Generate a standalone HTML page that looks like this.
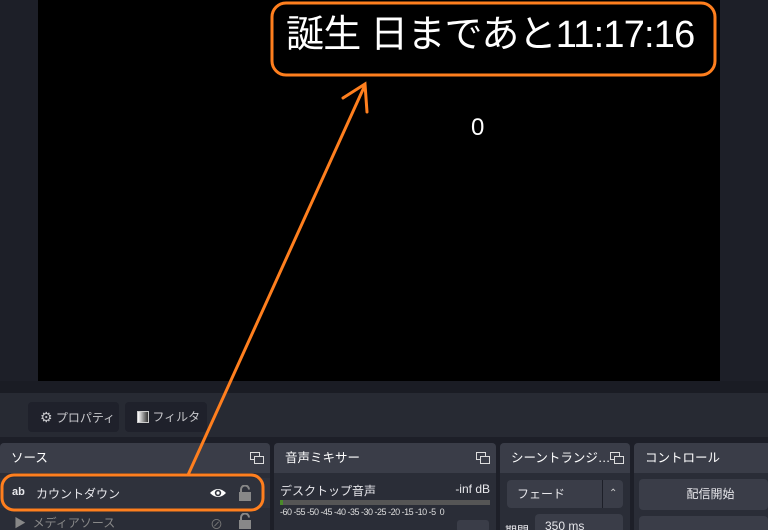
<!DOCTYPE html>
<html><head><meta charset="utf-8"><style>
*{margin:0;padding:0;box-sizing:border-box}
html,body{width:768px;height:530px;overflow:hidden}
body{background:#1d1f28;font-family:"Liberation Sans","Noto Sans CJK JP",sans-serif;color:#e8e8ec;position:relative;font-size:12px}
.abs{position:absolute}
.prev{left:38px;top:0;width:682px;height:381px;background:#000}
.band{left:0;top:381px;width:768px;height:12px;background:#1a1c24}
.tool{left:0;top:393px;width:768px;height:44px;background:#272a33}
.btn{top:402px;height:30px;background:#1f212b;border-radius:4px;color:#c8c8cc;font-size:12px;line-height:30px;padding-left:12px}
.panel{top:443px;height:87px;background:#2a2d37;border-radius:4px 4px 0 0;overflow:hidden}
.hdr{height:30px;background:#3a3d48;line-height:30px;padding-left:11px;font-size:12.5px;color:#fff;position:relative}
.dock{position:absolute;top:9px;right:6px;width:14px;height:12px}
</style></head><body>
<div class="abs prev"></div>
<div class="abs" style="left:286px;top:12px;font-size:38px;line-height:46px;color:#fff;letter-spacing:-0.8px;white-space:nowrap">誕生 日まであと11:17:16</div>
<div class="abs" style="left:471px;top:114px;font-size:24px;color:#fff">0</div>
<div class="abs band"></div>
<div class="abs tool"></div>
<div class="abs btn" style="left:28px;width:91px"><span style="font-size:14px">⚙</span> プロパティ</div>
<div class="abs btn" style="left:125px;width:82px"><span style="display:inline-block;width:12px;height:12px;border:1px solid #ccc;background:linear-gradient(90deg,#fff,#333);vertical-align:-2px"></span> フィルタ</div>

<div class="abs panel" style="left:0;width:270px">
 <div class="hdr">ソース<svg class="dock" viewBox="0 0 14 12"><rect x="0.5" y="0.5" width="9" height="7" fill="none" stroke="#ddd"/><rect x="4.5" y="4.5" width="9" height="7" fill="#3a3d48" stroke="#ddd"/></svg></div>
 <div class="abs" style="left:0;top:35px;width:270px;height:30px;background:#2f323c"></div>
 <div class="abs" style="left:12px;top:43px;font-size:11px;font-weight:bold">ab</div>
 <div class="abs" style="left:36px;top:42px;font-size:12px">カウントダウン</div>
 <svg class="abs" style="left:209px;top:44px" width="18" height="12" viewBox="0 0 18 12"><path d="M1 6 Q9 -2 17 6 Q9 14 1 6Z" fill="#fff"/><circle cx="9" cy="6" r="3.2" fill="#2f323c"/><circle cx="9" cy="6" r="1.6" fill="#fff"/></svg>
 <svg class="abs" style="left:238px;top:42px" width="14" height="16" viewBox="0 0 14 16"><path d="M3 7V4.5a4 4 0 0 1 8 0" fill="none" stroke="#888" stroke-width="2"/><rect x="1" y="7" width="12" height="9" fill="#888"/></svg>
 <div class="abs" style="left:14px;top:71px;color:#888;font-size:12px">▶&nbsp;&nbsp;メディアソース</div>
 <div class="abs" style="left:210px;top:71px;color:#777;font-size:13px">⊘</div>
 <svg class="abs" style="left:238px;top:70px" width="14" height="16" viewBox="0 0 14 16"><path d="M3 7V4.5a4 4 0 0 1 8 0" fill="none" stroke="#888" stroke-width="2"/><rect x="1" y="7" width="12" height="9" fill="#888"/></svg>
</div>
<div class="abs panel" style="left:274px;width:222px">
 <div class="hdr">音声ミキサー<svg class="dock" viewBox="0 0 14 12"><rect x="0.5" y="0.5" width="9" height="7" fill="none" stroke="#ddd"/><rect x="4.5" y="4.5" width="9" height="7" fill="#3a3d48" stroke="#ddd"/></svg></div>
 <div class="abs" style="left:6px;top:39px">デスクトップ音声</div>
 <div class="abs" style="right:6px;top:39px">-inf dB</div>
 <div class="abs" style="left:6px;top:57px;width:210px;height:5px;background:#555"></div>
 <div class="abs" style="left:6px;top:57px;width:3px;height:5px;background:#4a8a2a"></div>
 <div class="abs" style="left:6px;top:64px;font-size:9px;color:#ddd;white-space:nowrap;letter-spacing:-0.5px">-60 -55 -50 -45 -40 -35 -30 -25 -20 -15 -10 -5 &nbsp;0</div>
 <div class="abs" style="left:183px;top:77px;width:32px;height:12px;background:#3a3d48;border-radius:3px"></div>
</div>
<div class="abs panel" style="left:500px;width:130px">
 <div class="hdr">シーントランジ…<svg class="dock" viewBox="0 0 14 12"><rect x="0.5" y="0.5" width="9" height="7" fill="none" stroke="#ddd"/><rect x="4.5" y="4.5" width="9" height="7" fill="#3a3d48" stroke="#ddd"/></svg></div>
 <div class="abs" style="left:7px;top:37px;width:116px;height:28px;background:#3a3d48;border-radius:4px;line-height:28px;padding-left:10px">フェード<span class="abs" style="left:95px;top:0;width:1px;height:28px;background:#1d1f28"></span><span class="abs" style="left:102px;top:0;font-size:10px;color:#ccc">⌃</span></div>
 <div class="abs" style="left:5px;top:79px">期間</div>
 <div class="abs" style="left:35px;top:71px;width:88px;height:24px;background:#3a3d48;border-radius:4px;padding-left:10px;line-height:24px">350 ms</div>
</div>
<div class="abs panel" style="left:634px;width:134px;border-radius:4px 0 0 0">
 <div class="hdr">コントロール</div>
 <div class="abs" style="left:5px;top:36px;width:129px;height:31px;background:#3a3d48;border-radius:4px;line-height:31px;text-align:center;padding-left:14px">配信開始</div>
 <div class="abs" style="left:5px;top:73px;width:129px;height:20px;background:#3a3d48;border-radius:4px"></div>
</div>

<svg class="abs" style="left:0;top:0" width="768" height="530" viewBox="0 0 768 530">
 <rect x="272" y="3" width="443" height="72" rx="14" fill="none" stroke="#ff7f1e" stroke-width="3"/>
 <line x1="188" y1="475" x2="365" y2="85" stroke="#ff7f1e" stroke-width="3"/>
 <polyline points="343,98 365,84 367,112" fill="none" stroke="#ff7f1e" stroke-width="3" stroke-linecap="round"/>
 <rect x="2" y="475" width="261" height="35" rx="12" fill="none" stroke="#ff7f1e" stroke-width="3"/>
</svg>
</body></html>
